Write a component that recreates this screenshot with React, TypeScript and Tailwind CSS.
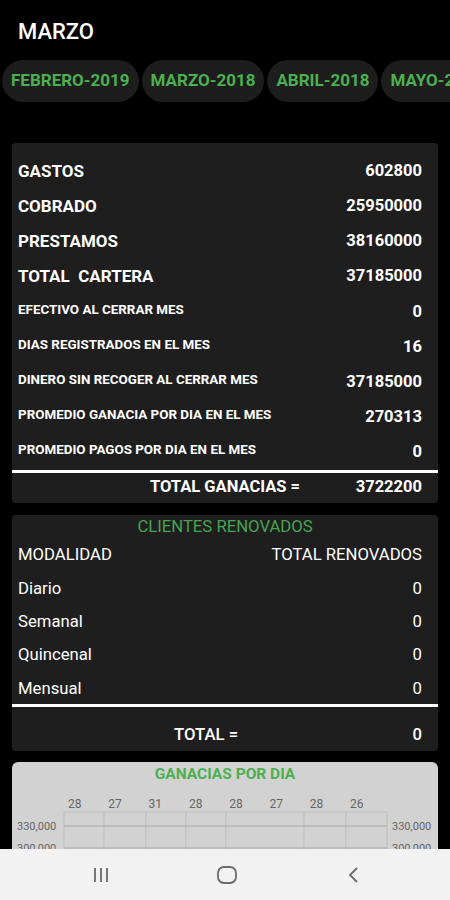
import React from "react";

const chips = ["FEBRERO-2019", "MARZO-2018", "ABRIL-2018", "MAYO-2018"];

const mainRows = [
  { label: "GASTOS", value: "602800", small: false },
  { label: "COBRADO", value: "25950000", small: false },
  { label: "PRESTAMOS", value: "38160000", small: false },
  { label: "TOTAL  CARTERA", value: "37185000", small: false },
  { label: "EFECTIVO AL CERRAR MES", value: "0", small: true },
  { label: "DIAS REGISTRADOS EN EL MES", value: "16", small: true },
  { label: "DINERO SIN RECOGER AL CERRAR MES", value: "37185000", small: true },
  { label: "PROMEDIO GANACIA POR DIA EN EL MES", value: "270313", small: true },
  { label: "PROMEDIO PAGOS POR DIA EN EL MES", value: "0", small: true },
];

const renovados = [
  { label: "Diario", value: "0" },
  { label: "Semanal", value: "0" },
  { label: "Quincenal", value: "0" },
  { label: "Mensual", value: "0" },
];

const dayLabels = ["28", "27", "31", "28", "28", "27", "28", "26"];
const gridX = [52, 92, 134, 174, 214, 292, 334, 375];

function Chart() {
  return (
    <svg width="426" height="140" className="block">
      {dayLabels.map((d, i) => (
        <text key={i} x={56 + i * 40.3} y={46} fontSize="12" fill="#666" fontFamily="Roboto, sans-serif">
          {d}
        </text>
      ))}
      {gridX.map((x, i) => (
        <line key={i} x1={x} y1={50} x2={x} y2={140} stroke="#bdbdbd" strokeWidth="1" />
      ))}
      <line x1={52} y1={50} x2={375} y2={50} stroke="#bdbdbd" strokeWidth="1" />
      <line x1={52} y1={64} x2={375} y2={64} stroke="#a8a8a8" strokeWidth="1" />
      <line x1={52} y1={86} x2={375} y2={86} stroke="#a8a8a8" strokeWidth="1" />
      <text x={5} y={68} fontSize="11" fill="#666" fontFamily="Roboto, sans-serif">330,000</text>
      <text x={380} y={68} fontSize="11" fill="#666" fontFamily="Roboto, sans-serif">330,000</text>
      <text x={5} y={90} fontSize="11" fill="#666" fontFamily="Roboto, sans-serif">300,000</text>
      <text x={380} y={90} fontSize="11" fill="#666" fontFamily="Roboto, sans-serif">300,000</text>
    </svg>
  );
}

export default function App() {
  return (
    <div className="w-[450px] h-[900px] bg-black flex flex-col overflow-hidden font-['Roboto',sans-serif]">
      <div className="flex-1 overflow-hidden">
        <div className="h-[60px] flex items-center pl-[18px] pt-[3px]">
          <p className="text-white text-[22px] font-medium">MARZO</p>
        </div>
        <div className="flex gap-[3px] pl-[2px] overflow-hidden whitespace-nowrap">
          {chips.map((c) => (
            <div key={c} className="h-[42px] shrink-0 rounded-full bg-[#1d1d1d] px-[9px] flex items-center">
              <span className="text-[#4caf50] text-[17px] font-bold">{c}</span>
            </div>
          ))}
        </div>

        <div className="mx-3 mt-[41px] bg-[#1e1e1e] rounded-[4px] pt-[11px]">
          {mainRows.map((r) => (
            <div key={r.label} className="h-[35.1px] flex items-center justify-between pl-[6px] pr-[16px]">
              <span
                className={
                  r.small
                    ? "text-white text-[13.4px] font-bold pb-[4px]"
                    : "text-white text-[17px] font-bold whitespace-pre"
                }
              >
                {r.label}
              </span>
              <span className="text-white text-[16.5px] font-bold">{r.value}</span>
            </div>
          ))}
          <div className="h-[3px] bg-white" />
          <div className="h-[30px] flex items-center pr-[16px]">
            <span className="ml-[138px] text-white text-[16.5px] font-bold">TOTAL GANACIAS =</span>
            <span className="ml-auto text-white text-[16.5px] font-bold">3722200</span>
          </div>
        </div>

        <div className="mx-3 mt-[12px] bg-[#1e1e1e] rounded-[4px]">
          <p className="h-[22px] flex items-center justify-center text-[#46a452] text-[16.7px] pt-[2px]">CLIENTES RENOVADOS</p>
          <div className="h-[34px] flex items-center justify-between pl-[6px] pr-[16px] pt-[2px]">
            <span className="text-white text-[16.7px]">MODALIDAD</span>
            <span className="text-white text-[16.7px]">TOTAL RENOVADOS</span>
          </div>
          {renovados.map((r) => (
            <div key={r.label} className="h-[33.25px] flex items-center justify-between pl-[6px] pr-[16px] pt-[2px]">
              <span className="text-white text-[16.7px]">{r.label}</span>
              <span className="text-white text-[16.7px]">{r.value}</span>
            </div>
          ))}
          <div className="h-[3px] bg-white" />
          <div className="h-[44px] flex items-center pr-[16px] pt-[12px]">
            <span className="ml-[162px] text-white text-[16.7px] font-medium">TOTAL =</span>
            <span className="ml-auto text-white text-[16.7px] font-medium">0</span>
          </div>
        </div>

        <div className="mx-3 mt-[11px] bg-[#d2d2d2] rounded-t-[6px] h-[200px]">
          <p className="h-[26px] flex items-center justify-center text-[#4cb050] text-[15.5px] font-bold">GANACIAS POR DIA</p>
          <div className="-mt-[26px]">
            <Chart />
          </div>
        </div>
      </div>

      <div className="h-[51px] bg-[#f2f2f2] flex items-center pl-[81px] gap-[86px] shrink-0">
        <div className="w-[40px] flex justify-center">
          <svg width="18" height="16" viewBox="0 0 18 16">
            <path d="M3 1v14M9 1v14M15 1v14" stroke="#6a6a6a" strokeWidth="1.8" fill="none" />
          </svg>
        </div>
        <div className="w-[40px] flex justify-center">
          <svg width="22" height="20" viewBox="0 0 22 20">
            <rect x="2" y="2" width="18" height="16" rx="6" stroke="#6a6a6a" strokeWidth="1.8" fill="none" />
          </svg>
        </div>
        <div className="w-[40px] flex justify-center">
          <svg width="14" height="18" viewBox="0 0 14 18">
            <path d="M11 2L4 9l7 7" stroke="#6a6a6a" strokeWidth="1.8" fill="none" />
          </svg>
        </div>
      </div>
    </div>
  );
}
